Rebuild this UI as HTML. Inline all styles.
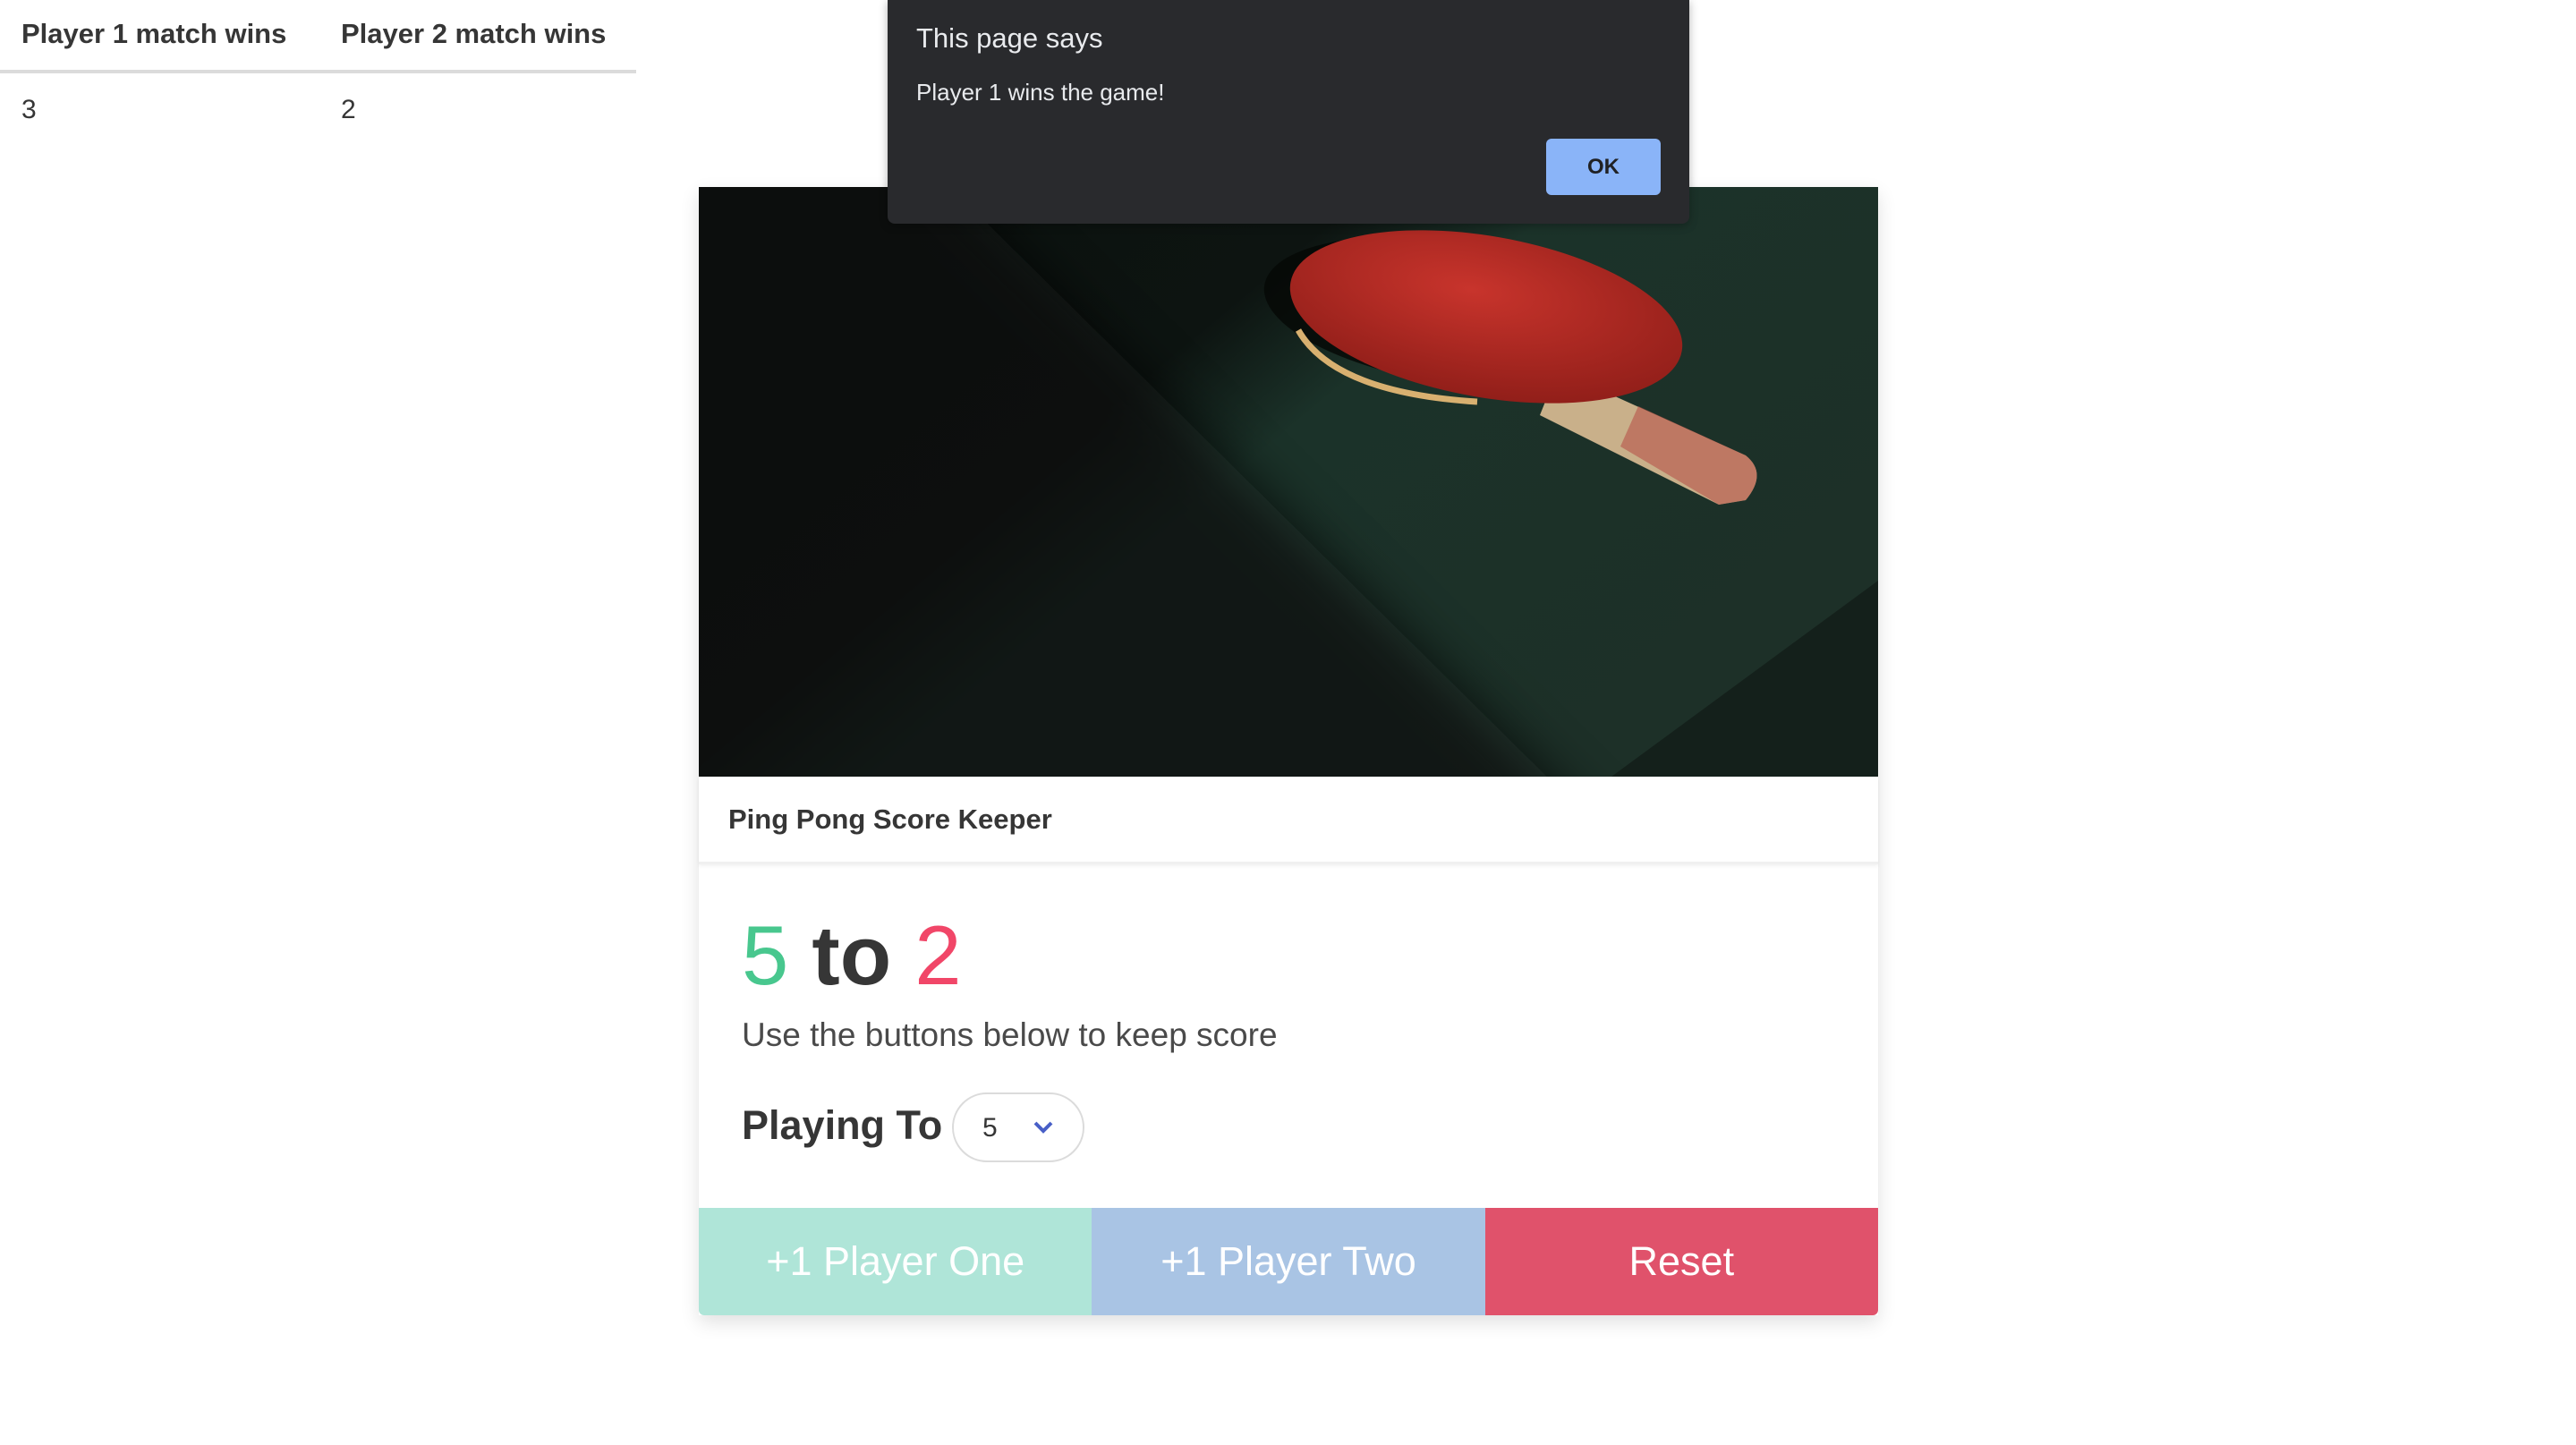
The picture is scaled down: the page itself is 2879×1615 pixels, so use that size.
<!DOCTYPE html>
<html><head><meta charset="utf-8"><style>
body{margin:0;width:2879px;height:1615px;background:#fff;font-family:"Liberation Sans",sans-serif;position:relative;overflow:hidden;color:#363636}
.abs{position:absolute}
</style></head><body>
<div class="abs" style="left:24px;top:20px;font-weight:bold;font-size:31px">Player 1 match wins</div>
<div class="abs" style="left:381px;top:20px;font-weight:bold;font-size:31px">Player 2 match wins</div>
<div class="abs" style="left:0;top:78px;width:711px;height:4px;background:#dbdbdb"></div>
<div class="abs" style="left:24px;top:106px;font-size:30px">3</div>
<div class="abs" style="left:381px;top:106px;font-size:30px">2</div>

<div class="abs" style="left:781px;top:209px;width:1318px;height:1261px;box-shadow:0 8px 20px rgba(0,0,0,.12)">
<svg width="1318" height="659" style="display:block">
<defs>
<linearGradient id="sh" x1="0" y1="0" x2="1" y2="0.6">
<stop offset="0" stop-color="#0b110e"/><stop offset="0.42" stop-color="#0d1411"/><stop offset="0.55" stop-color="#1b3229"/><stop offset="1" stop-color="#1d3028"/></linearGradient>
<radialGradient id="pd" cx="0.45" cy="0.35" r="0.7"><stop offset="0" stop-color="#c8342c"/><stop offset="1" stop-color="#8e1d18"/></radialGradient>
<filter id="b"><feGaussianBlur stdDeviation="30"/></filter>
</defs>
<rect width="1318" height="659" fill="url(#sh)"/>
<polygon points="-100,-100 180,-100 1050,760 -100,760" fill="#0a0f0c" opacity="0.7" filter="url(#b)"/>
<polygon points="1318,440 1318,659 1020,659" fill="#111a16" opacity="0.7"/>
<ellipse cx="845" cy="140" rx="215" ry="80" fill="#050805" opacity="0.8" transform="rotate(8 845 140)"/>
<path d="M960 205 L1170 300 Q1195 320 1170 350 L1140 355 L940 255 Z" fill="#c9b08a"/>
<path d="M1050 245 L1170 300 Q1195 320 1170 350 L1140 355 L1030 290 Z" fill="#b8544a" opacity="0.6"/>
<ellipse cx="880" cy="145" rx="222" ry="90" fill="url(#pd)" transform="rotate(10 880 145)"/>
<path d="M670 160 Q710 230 870 240" stroke="#d8b070" stroke-width="7" fill="none"/>
</svg>
<div style="height:98px;border-bottom:3px solid #f0f0f0;box-shadow:0 2px 4px rgba(0,0,0,.06);display:flex;align-items:center;padding-left:33px;font-weight:bold;font-size:31px;box-sizing:border-box">Ping Pong Score Keeper</div>
<div class="abs" style="left:48px;top:812px;font-size:94px;font-weight:bold;line-height:1"><span style="color:#48c78e;font-weight:normal">5</span> to <span style="color:#f14668;font-weight:normal">2</span></div>
<div class="abs" style="left:48px;top:927px;font-size:37px;color:#4a4a4a">Use the buttons below to keep score</div>
<div class="abs" style="left:48px;top:1023px;font-size:45px;font-weight:bold">Playing To</div>
<div class="abs" style="left:283px;top:1012px;width:148px;height:78px;border:2px solid #dbdbdb;border-radius:39px;box-sizing:border-box">
<span class="abs" style="left:32px;top:21px;font-size:30px">5</span>
<svg class="abs" style="left:88px;top:28px" width="24" height="18"><path d="M3 4 L12 13 L21 4" stroke="#485fc7" stroke-width="4" fill="none"/></svg>
</div>
<div class="abs" style="left:0;top:1141px;width:1318px;height:120px;display:flex;font-size:45px;color:#fff">
<div style="flex:1;background:#afe5d8;display:flex;align-items:center;justify-content:center;border-radius:0 0 0 6px">+1 Player One</div>
<div style="flex:1;background:#a9c4e4;display:flex;align-items:center;justify-content:center">+1 Player Two</div>
<div style="flex:1;background:#e0526b;display:flex;align-items:center;justify-content:center;border-radius:0 0 6px 0">Reset</div>
</div>
</div>

<div class="abs" style="left:992px;top:0;width:896px;height:250px;background:#292a2d;border-radius:0 0 8px 8px;box-shadow:0 2px 10px rgba(0,0,0,.3)">
<div class="abs" style="left:32px;top:25px;font-size:31px;color:#e8eaed">This page says</div>
<div class="abs" style="left:32px;top:88px;font-size:26px;color:#e8eaed">Player 1 wins the game!</div>
<div class="abs" style="left:736px;top:155px;width:128px;height:63px;background:#8ab4f8;border-radius:6px;display:flex;align-items:center;justify-content:center;font-size:24px;font-weight:bold;color:#202124">OK</div>
</div>
</body></html>
